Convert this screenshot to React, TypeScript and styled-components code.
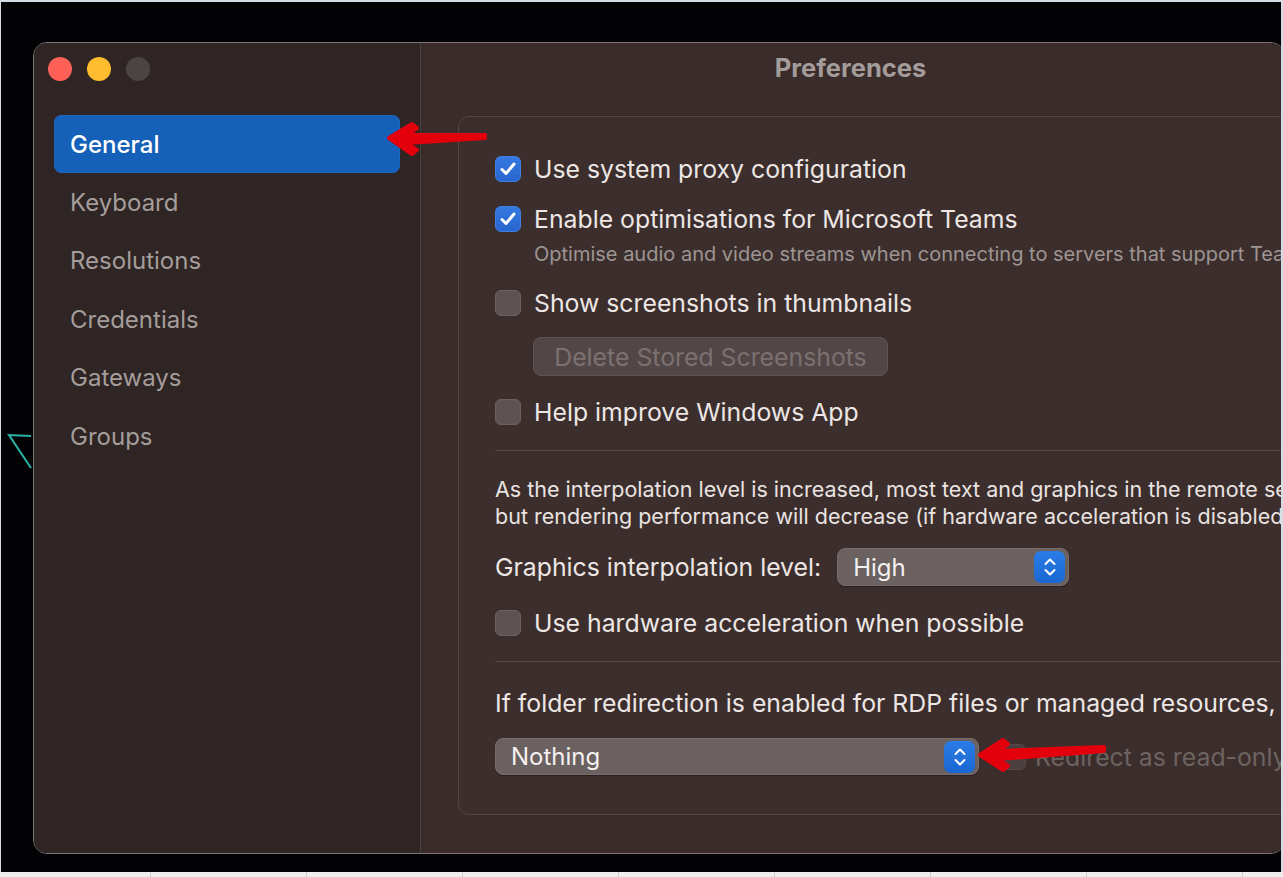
import * as React from "react";
import styled, { createGlobalStyle } from "styled-components";

const GlobalStyle = createGlobalStyle`
  html, body {
    margin: 0;
    padding: 0;
    background: #e6e8eb;
  }
  body {
    font-family: Inter, "Noto Sans", sans-serif;
  }
`;

const Frame = styled.div`
  width: 1283px;
  height: 877px;
  background: #d3dbe5;
  padding-top: 2px;
  padding-left: 1px;
  box-sizing: border-box;
  display: flex;
  flex-direction: column;
  overflow: hidden;
`;

const Screen = styled.div`
  position: relative;
  width: 1280px;
  height: 870px;
  background: #030305;
  overflow: hidden;
  padding: 40px 0 0 32px;
  box-sizing: border-box;
`;

const Taskbar = styled.div`
  flex: 1;
  margin-left: -1px;
  background: #eeeeef;
  display: flex;
`;

const TaskCell = styled.div`
  width: 156px;
  flex-shrink: 0;
  border-right: 1px solid #cfcfd2;
  box-sizing: border-box;
  &:first-child {
    width: 151px;
  }
`;

const Decoration = styled.svg`
  position: absolute;
  left: 0;
  top: 0;
  pointer-events: none;
`;

const Window = styled.div`
  position: relative;
  width: 1252px;
  height: 812px;
  border: 1px solid #7c7474;
  border-radius: 14px;
  overflow: hidden;
  display: flex;
  box-sizing: border-box;
`;

const Sidebar = styled.div`
  width: 386px;
  flex-shrink: 0;
  background: #2e2524;
  padding: 14px 20px 0 20px;
  box-sizing: border-box;
  display: flex;
  flex-direction: column;
`;

const Lights = styled.div`
  display: flex;
  gap: 15px;
  margin-left: -6px;
  height: 24px;
  align-items: center;
`;

const Light = styled.span<{ $color: string }>`
  width: 24px;
  height: 24px;
  border-radius: 50%;
  background: ${(p) => p.$color};
`;

const NavList = styled.div`
  margin-top: 34px;
  display: flex;
  flex-direction: column;
`;

const NavItem = styled.div<{ $active?: boolean }>`
  height: 58.4px;
  flex-shrink: 0;
  display: flex;
  align-items: center;
  padding-left: 16px;
  border-radius: 8px;
  font-size: 24px;
  font-weight: ${(p) => (p.$active ? 500 : 400)};
  color: ${(p) => (p.$active ? "#ffffff" : "#a59d9b")};
  background: ${(p) => (p.$active ? "#1560b8" : "transparent")};
  box-shadow: ${(p) => (p.$active ? "inset 0 0 0 1px #1d66bd" : "none")};
`;

const Content = styled.div`
  flex: 1;
  min-width: 0;
  overflow: hidden;
  background: #3a2c2a;
  border-left: 1px solid #4a3f3d;
  display: flex;
  flex-direction: column;
`;

const TitleBar = styled.div`
  height: 49px;
  flex-shrink: 0;
  display: flex;
  align-items: center;
  justify-content: center;
  padding-bottom: 3px;
  padding-right: 4px;
  font-size: 25.5px;
  font-weight: 700;
  color: #a39c9a;
`;

const GroupBox = styled.div`
  margin: 21px -40px 38px 37px;
  flex: 1;
  background: #3c2e2c;
  border: 1px solid #514644;
  border-radius: 11px;
  padding: 37px 0 0 36px;
  display: flex;
  flex-direction: column;
`;

const Row = styled.div<{ $mt?: number }>`
  display: flex;
  align-items: center;
  height: 30px;
  flex-shrink: 0;
  margin-top: ${(p) => p.$mt ?? 0}px;
  font-size: 24.8px;
  color: #ece6e4;
  white-space: nowrap;
`;

const Box = styled.span<{ $checked?: boolean; $dim?: boolean }>`
  width: 26px;
  height: 26px;
  flex-shrink: 0;
  box-sizing: border-box;
  border-radius: 6px;
  margin-right: ${(p) => (p.$dim ? 9 : 13)}px;
  display: flex;
  align-items: center;
  justify-content: center;
  background: ${(p) =>
    p.$checked ? "linear-gradient(#3479e0, #2866cf)" : p.$dim ? "#4a3f3e" : "#5c5352"};
  border: 1px solid ${(p) => (p.$checked ? "#3f7fe0" : p.$dim ? "#544a49" : "#6a6160")};
`;

const Desc = styled.div<{ $mt?: number }>`
  margin-top: ${(p) => p.$mt ?? 0}px;
  padding-left: 39px;
  font-size: 20px;
  line-height: 24px;
  color: #9d9593;
  white-space: nowrap;
`;

const PushButton = styled.div<{ $mt?: number }>`
  margin-top: ${(p) => p.$mt ?? 0}px;
  margin-left: 38px;
  width: 355px;
  height: 39px;
  flex-shrink: 0;
  box-sizing: border-box;
  border-radius: 8px;
  background: #524746;
  border: 1px solid #5e5453;
  display: flex;
  align-items: center;
  justify-content: center;
  font-size: 24.8px;
  color: #7b7170;
  white-space: nowrap;
`;

const Divider = styled.div<{ $mt?: number }>`
  margin-top: ${(p) => p.$mt ?? 0}px;
  height: 1px;
  flex-shrink: 0;
  background: #524745;
`;

const Para = styled.div<{ $mt?: number }>`
  margin-top: ${(p) => p.$mt ?? 0}px;
  font-size: 21.5px;
  line-height: 27px;
  color: #e9e3e1;
  white-space: nowrap;
`;

const SelectRow = styled.div<{ $mt?: number; $h: number }>`
  margin-top: ${(p) => p.$mt ?? 0}px;
  height: ${(p) => p.$h}px;
  flex-shrink: 0;
  display: flex;
  align-items: center;
  font-size: 24.8px;
  color: #ece6e4;
  white-space: nowrap;
`;

const Spacer = styled.span<{ $w: number }>`
  width: ${(p) => p.$w}px;
  flex-shrink: 0;
`;

const Select = styled.div<{ $w: number }>`
  width: ${(p) => p.$w}px;
  height: 100%;
  flex-shrink: 0;
  box-sizing: border-box;
  border-radius: 8px;
  background: #6a6160;
  border: 1px solid #766d6c;
  box-shadow: 0 1px 1px rgba(0, 0, 0, 0.35);
  display: flex;
  align-items: center;
  justify-content: space-between;
  padding: 0 3px 0 15px;
  font-size: 24px;
  color: #f4f0ef;
`;

const Stepper = styled.span`
  width: 31px;
  height: 32px;
  border-radius: 7px;
  background: linear-gradient(#2a7ce6, #1a67d2);
  display: flex;
  align-items: center;
  justify-content: center;
`;

const Dim = styled.span`
  color: #6d6361;
  font-size: 24.8px;
`;

const Check = () => (
  <svg width="20" height="20" viewBox="0 0 20 20">
    <path d="M4 10.5 L8 14.5 L16 5" fill="none" stroke="#fff" strokeWidth="3" strokeLinecap="round" strokeLinejoin="round" />
  </svg>
);

const Chevrons = () => (
  <svg width="16" height="24" viewBox="0 0 16 24">
    <path d="M3.5 9 L8 4.5 L12.5 9" fill="none" stroke="#fff" strokeWidth="2" strokeLinecap="round" strokeLinejoin="round" />
    <path d="M3.5 15 L8 19.5 L12.5 15" fill="none" stroke="#fff" strokeWidth="2" strokeLinecap="round" strokeLinejoin="round" />
  </svg>
);

const navItems = ["General", "Keyboard", "Resolutions", "Credentials", "Gateways", "Groups"];

export default function App() {
  return (
    <>
      <GlobalStyle />
      <Frame>
        <Screen>
          <Decoration width="60" height="500">
            <path d="M30 434 L8 433 L30 466" fill="none" stroke="#2bb3a6" strokeWidth="2" />
          </Decoration>
          <Window>
            <Sidebar>
              <Lights>
                <Light $color="#fe5f57" />
                <Light $color="#febc2e" />
                <Light $color="#4a4444" />
              </Lights>
              <NavList>
                {navItems.map((n, i) => (
                  <NavItem key={n} $active={i === 0}>
                    {n}
                  </NavItem>
                ))}
              </NavList>
            </Sidebar>
            <Content>
              <TitleBar>Preferences</TitleBar>
              <GroupBox>
                <Row>
                  <Box $checked>
                    <Check />
                  </Box>
                  Use system proxy configuration
                </Row>
                <Row $mt={20}>
                  <Box $checked>
                    <Check />
                  </Box>
                  Enable optimisations for Microsoft Teams
                </Row>
                <Desc $mt={8}>
                  Optimise audio and video streams when connecting to servers that support Teams
                </Desc>
                <Row $mt={22}>
                  <Box />
                  Show screenshots in thumbnails
                </Row>
                <PushButton $mt={19}>Delete Stored Screenshots</PushButton>
                <Row $mt={21}>
                  <Box />
                  Help improve Windows App
                </Row>
                <Divider $mt={23} />
                <Para $mt={25}>
                  As the interpolation level is increased, most text and graphics in the remote session will look smoother,
                  <br />
                  but rendering performance will decrease (if hardware acceleration is disabled).
                </Para>
                <SelectRow $mt={18} $h={38}>
                  Graphics interpolation level:
                  <Spacer $w={16} />
                  <Select $w={232}>
                    High
                    <Stepper>
                      <Chevrons />
                    </Stepper>
                  </Select>
                </SelectRow>
                <Row $mt={22}>
                  <Box />
                  Use hardware acceleration when possible
                </Row>
                <Divider $mt={23} />
                <SelectRow $mt={26} $h={30}>
                  If folder redirection is enabled for RDP files or managed resources, redirect:
                </SelectRow>
                <SelectRow $mt={20} $h={37}>
                  <Select $w={484}>
                    Nothing
                    <Stepper>
                      <Chevrons />
                    </Stepper>
                  </Select>
                  <Spacer $w={21} />
                  <Box $dim />
                  <Dim>Redirect as read-only</Dim>
                </SelectRow>
              </GroupBox>
            </Content>
          </Window>
          <Decoration width="1280" height="870">
            <polygon
              points="388,136 411,122 416,126 406,133 484,133 484,136 406,141 416,148 411,152"
              fill="#e3000c"
              stroke="#e3000c"
              strokeWidth="4"
              strokeLinejoin="round"
            />
            <polygon
              points="979,753 1002,738 1007,742 997,749 1103,745 1103,749 997,757 1007,764 1002,768"
              fill="#e3000c"
              stroke="#e3000c"
              strokeWidth="4"
              strokeLinejoin="round"
            />
          </Decoration>
        </Screen>
        <Taskbar>
          {Array.from({ length: 9 }).map((_, i) => (
            <TaskCell key={i} />
          ))}
        </Taskbar>
      </Frame>
    </>
  );
}
